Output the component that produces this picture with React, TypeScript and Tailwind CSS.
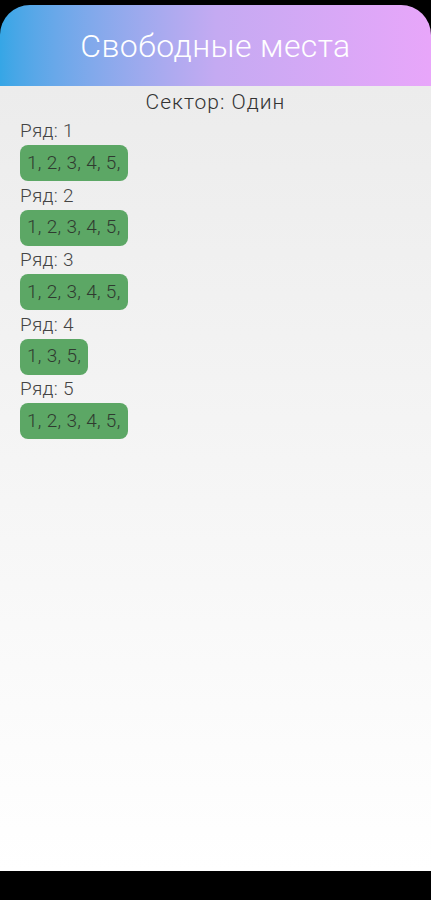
const rows = [
  { row: 1, seats: [1, 2, 3, 4, 5] },
  { row: 2, seats: [1, 2, 3, 4, 5] },
  { row: 3, seats: [1, 2, 3, 4, 5] },
  { row: 4, seats: [1, 3, 5] },
  { row: 5, seats: [1, 2, 3, 4, 5] },
];

export default function App() {
  return (
    <div
      className="w-[431px] h-[900px] bg-black flex flex-col overflow-hidden"
      style={{ fontFamily: "Roboto, 'Noto Sans', sans-serif" }}
    >
      {/* Header */}
      <div className="mt-[5px] h-[81px] rounded-t-[30px] bg-gradient-to-r from-[#35a6e6] via-[#c4aaf2] to-[#e8a6fa] flex items-center justify-center">
        <h1 className="text-white font-light text-[32px] tracking-[0.4px] leading-none">
          Свободные места
        </h1>
      </div>

      {/* Content */}
      <div className="h-[785px] bg-gradient-to-b from-[#ececec] to-[#ffffff] pt-[2px]">
        <p className="text-center text-[21px] tracking-[1px] leading-[28px] font-light text-[#333]">
          Сектор: Один
        </p>
        <div className="px-5 mt-[3px]">
          {rows.map((r) => (
            <div key={r.row} className="flex flex-col items-start">
              <span className="text-[19px] tracking-[0.3px] leading-[24px] font-light text-[#444]">
                Ряд: {r.row}
              </span>
              <div className="mt-[2px] mb-[2.5px] h-[36px] px-[7px] rounded-[8px] bg-[#5ca765] flex items-center text-[19px] tracking-[0.3px] font-light text-[#2f3a30]">
                {r.seats.map((s) => `${s}, `).join("").trimEnd()}
              </div>
            </div>
          ))}
        </div>
      </div>
    </div>
  );
}
